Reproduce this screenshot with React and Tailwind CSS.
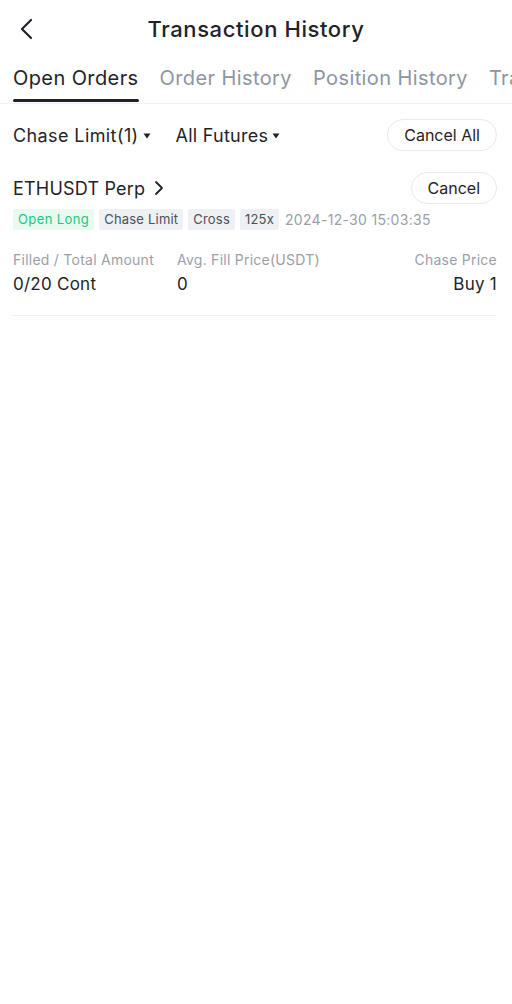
import React from "react";

const tabs = ["Open Orders", "Order History", "Position History", "Trade History"];

function Caret() {
    return (
        <svg width="8" height="6" viewBox="0 0 8 6" className="ml-1 mt-0.5">
            <path d="M0.5 0.5 L7.5 0.5 L4 5.5 Z" fill="#1f2329" />
        </svg>
    );
}

export default function App() {
    return (
        <div
            className="w-[512px] h-[1004px] bg-white text-[#1f2329] overflow-hidden tracking-[0.4px]"
            style={{ fontFamily: "Inter, 'Noto Sans', sans-serif" }}
        >
            {/* header */}
            <div className="relative h-[58px] flex items-center justify-center">
                <button className="absolute left-[18px] top-[18px]">
                    <svg width="18" height="22" viewBox="0 0 18 22" fill="none">
                        <path d="M13 2 L4 11 L13 20" stroke="#1f2329" strokeWidth="2.2" strokeLinecap="round" strokeLinejoin="round" />
                    </svg>
                </button>
                <h1 className="text-[22px] font-medium tracking-[0.6px] mt-[1px]">Transaction History</h1>
            </div>

            {/* tabs */}
            <div className="border-b border-[#f0f1f3] h-[46px] flex gap-[21px] px-[13px] whitespace-nowrap overflow-hidden">
                {tabs.map((t, i) => (
                    <div key={t} className="relative flex flex-col items-center shrink-0">
                        <span className={`text-[20px] leading-[40px] ${i === 0 ? "text-[#1f2329]" : "text-[#8e95a2]"}`}>
                            {t}
                        </span>
                        {i === 0 && <div className="absolute left-0 right-0 top-[41px] h-[2.5px] bg-[#1f2329] rounded-full" />}
                    </div>
                ))}
            </div>

            {/* filters */}
            <div className="flex items-center px-[13px] pt-[15px]">
                <div className="flex items-center text-[18px]">
                    Chase Limit(1)
                    <Caret />
                </div>
                <div className="flex items-center text-[18px] ml-[25px] tracking-[0.25px]">
                    All Futures
                    <Caret />
                </div>
                <button className="ml-auto mr-[2px] h-[32px] px-[16px] rounded-full border border-[#e8eaed] text-[16px] tracking-[0px]">
                    Cancel All
                </button>
            </div>

            {/* order */}
            <div className="px-[13px] pt-[21px]">
                <div className="flex items-center justify-between">
                    <div className="flex items-center text-[18px] tracking-[0.2px]">
                        ETHUSDT Perp
                        <svg width="12" height="16" viewBox="0 0 12 16" fill="none" className="ml-[8px]">
                            <path d="M3 2 L9 8 L3 14" stroke="#1f2329" strokeWidth="1.8" strokeLinecap="round" strokeLinejoin="round" />
                        </svg>
                    </div>
                    <button className="mr-[2px] h-[32px] px-[16px] rounded-full border border-[#e8eaed] text-[16px] tracking-[0px]">
                        Cancel
                    </button>
                </div>

                <div className="flex items-center gap-[5px] mt-[5px] text-[13px] tracking-[0.2px]">
                    <span className="h-[21px] px-[5px] flex items-center bg-[#e9fbf1] text-[#1ec77f] rounded-[2px] tracking-[0.4px]">Open Long</span>
                    <span className="h-[21px] px-[5px] flex items-center bg-[#eef0f4] text-[#4b515a] rounded-[2px]">Chase Limit</span>
                    <span className="h-[21px] px-[5px] flex items-center bg-[#eef0f4] text-[#4b515a] rounded-[2px]">Cross</span>
                    <span className="h-[21px] px-[5px] flex items-center bg-[#eef0f4] text-[#4b515a] rounded-[2px]">125x</span>
                    <span className="text-[14px] text-[#9aa0aa] ml-[1px] tracking-[0.3px]">2024-12-30 15:03:35</span>
                </div>

                <div className="grid grid-cols-[164px_1fr_auto] mt-[19px] mr-[2px] tracking-[0.25px]">
                    <div className="text-[14px] text-[#9aa0aa]">Filled / Total Amount</div>
                    <div className="text-[14px] text-[#9aa0aa]">Avg. Fill Price(USDT)</div>
                    <div className="text-[14px] text-[#9aa0aa] text-right">Chase Price</div>
                    <div className="text-[17px] mt-[2px]">0/20 Cont</div>
                    <div className="text-[17px] mt-[2px]">0</div>
                    <div className="text-[17px] mt-[2px] text-right">Buy 1</div>
                </div>

                <div className="mt-[17px] mr-[2px] border-b border-[#f0f1f3]" />
            </div>
        </div>
    );
}
